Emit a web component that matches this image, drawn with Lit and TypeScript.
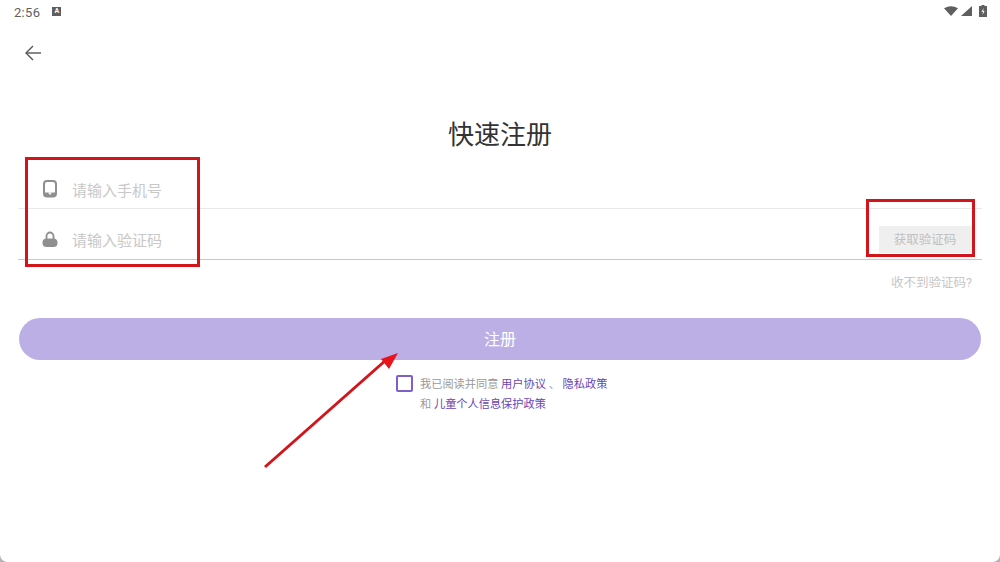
import { LitElement, html, css } from 'lit';
import { customElement } from 'lit/decorators.js';

@customElement('app-root')
export class AppRoot extends LitElement {
  static styles = css`
    :host {
      display: block;
      width: 1000px;
      height: 562px;
      position: relative;
      overflow: hidden;
      background: #fff;
      font-family: "Roboto", "Noto Sans CJK SC", sans-serif;
    }

    .status {
      height: 24px;
      display: flex;
      align-items: center;
      padding: 0 13px 0 14px;
      color: #5f5f5f;
      font-size: 13px;
      letter-spacing: 0.3px;
    }
    .status .a-icon {
      margin-left: 12px;
      width: 9px;
      height: 9px;
      margin-top: -1px;
      background: #5f5f5f;
      color: #fff;
      font-size: 7px;
      font-weight: 700;
      line-height: 9px;
      text-align: center;
      letter-spacing: 0;
    }
    .status .right {
      margin-left: auto;
      margin-top: -2px;
      display: flex;
      align-items: center;
      gap: 2px;
    }

    .nav {
      height: 57px;
      display: flex;
      align-items: center;
      padding-left: 24px;
      box-sizing: border-box;
    }

    .title {
      margin: 35px 0 0;
      height: 38px;
      line-height: 38px;
      text-align: center;
      font-size: 26px;
      font-weight: 400;
      color: #333;
    }

    .form {
      margin: 6px 18px 0;
    }
    .row {
      display: flex;
      align-items: center;
      border-bottom: 1px solid #e9e9e9;
      height: 50px;
      padding-left: 24px;
      box-sizing: border-box;
    }
    .row.first {
      height: 49px;
    }
    .row.last {
      height: 51px;
      border-bottom-color: #c8c8c8;
      padding-right: 9px;
    }
    .row .icon {
      width: 16px;
      height: 18px;
      flex: none;
    }
    .row .placeholder {
      margin-left: 14px;
      font-size: 15px;
      color: #c8c8c8;
    }
    .row .icon,
    .row .placeholder {
      position: relative;
      top: 5px;
    }
    .code-btn {
      margin-left: auto;
      margin-top: 11px;
      width: 94px;
      height: 27px;
      padding-right: 2px;
      box-sizing: border-box;
      background: #efefef;
      color: #c0c0c0;
      font-size: 12.5px;
      line-height: 27px;
      text-align: center;
    }

    .hint {
      margin: 15px 28px 0 0;
      height: 16px;
      line-height: 16px;
      text-align: right;
      font-size: 12.5px;
      color: #c6c6c6;
    }

    .submit {
      margin: 27px 19px 0;
      height: 42px;
      border-radius: 21px;
      background: #bcafe5;
      color: #fff;
      font-size: 16px;
      line-height: 44px;
      text-align: center;
    }

    .agree {
      margin: 15px 0 0 396px;
      display: flex;
      gap: 7px;
      font-size: 11.2px;
      line-height: 20px;
      color: #9a9a9a;
    }
    .check {
      width: 17px;
      height: 17px;
      box-sizing: border-box;
      border: 2px solid #7e5fcb;
      border-radius: 2px;
      flex: none;
    }
    .link {
      color: #6a45b5;
    }

    .mark {
      position: absolute;
      box-sizing: border-box;
      border: 3px solid #d2151a;
    }
    .mark.left {
      left: 25px;
      top: 157px;
      width: 175px;
      height: 110px;
    }
    .mark.right {
      left: 866px;
      top: 199px;
      width: 109px;
      height: 58px;
    }
    .overlay {
      position: absolute;
      left: 0;
      top: 0;
      pointer-events: none;
    }
  `;

  render() {
    return html`
      <div class="status">
        <span>2:56</span>
        <span class="a-icon">A</span>
        <span class="right">
          <svg width="14" height="10" viewBox="0 0 14 10"><path d="M0 2.200 Q7 -1.600 14 2.200 L7 10Z" fill="#5f5f5f"/></svg>
          <svg width="12" height="10" viewBox="0 0 12 10"><path d="M12 0 V10 H1Z" fill="#5f5f5f"/></svg>
          <svg width="8" height="12" viewBox="0 0 8 12" style="margin-left:5px"><path d="M2.500 0h3v1H8v11H0V1h2.500z" fill="#5f5f5f"/><path d="M4.700 3 2.500 6.700h1.500L3.400 10l2.200-3.900H4.100z" fill="#fff"/></svg>
        </span>
      </div>

      <div class="nav">
        <svg width="18" height="18" viewBox="0 0 18 18" fill="none" stroke="#555" stroke-width="1.4">
          <path d="M17 9H2"/>
          <path d="M9 2 2 9l7 7"/>
        </svg>
      </div>

      <h1 class="title">快速注册</h1>

      <div class="form">
        <div class="row first">
          <svg class="icon" viewBox="0 0 16 18">
            <rect x="2" y="1" width="12" height="15.500" rx="3" fill="none" stroke="#8f8f8f" stroke-width="2"/>
            <path d="M2 12.500h12v2a2 2 0 0 1-2 2H4a2 2 0 0 1-2-2z" fill="#8f8f8f"/>
            <path d="M6 12.600h4L8 15z" fill="#fff"/>
          </svg>
          <span class="placeholder">请输入手机号</span>
        </div>
        <div class="row last">
          <svg class="icon" viewBox="0 0 16 18">
            <path d="M4.500 9V6a3.500 3.500 0 0 1 7 0v3" fill="none" stroke="#8f8f8f" stroke-width="1.800"/>
            <path d="M4 8.500h8a4 4 0 0 1 3.500 4v.500a4 4 0 0 1-4 4h-7a4 4 0 0 1-4-4v-.500A4 4 0 0 1 4 8.500z" fill="#8f8f8f"/>
          </svg>
          <span class="placeholder">请输入验证码</span>
          <span class="code-btn">获取验证码</span>
        </div>
      </div>

      <div class="hint">收不到验证码?</div>

      <div class="submit">注册</div>

      <div class="agree">
        <span class="check"></span>
        <div>
          <div>我已阅读并同意 <span class="link">用户协议</span> 、 <span class="link">隐私政策</span></div>
          <div>和 <span class="link">儿童个人信息保护政策</span></div>
        </div>
      </div>

      <div class="mark left"></div>
      <div class="mark right"></div>
      <svg class="overlay" width="1000" height="562" viewBox="0 0 1000 562">
        <path d="M265 467 386 360" stroke="#d2151a" stroke-width="3" fill="none"/>
        <path d="M398 353 381 359 389 369Z" fill="#e8141a"/>
        <path d="M0 555Q1 561 7 562H0Z" fill="#b5b5b5"/>
        <path d="M1000 555Q999 561 993 562H1000Z" fill="#b5b5b5"/>
      </svg>
    `;
  }
}
